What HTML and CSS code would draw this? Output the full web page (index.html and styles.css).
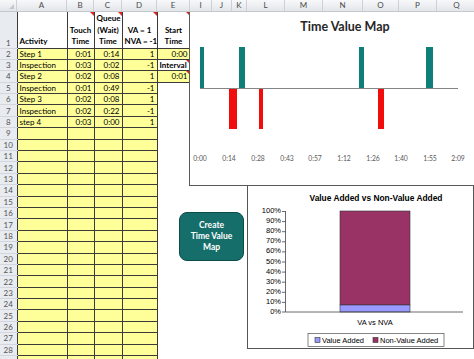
FILE: index.html
```html
<!DOCTYPE html>
<html lang="en">
<head>
  <meta charset="UTF-8">
  <title>Time Value Map</title>
  <link rel="stylesheet" href="styles.css">
</head>
<body>

  <!-- column letters (F:H are hidden) -->
  <div class="colhead">
    <div class="corner"></div>
    <div class="c-a">A</div>
    <div class="c-b">B</div>
    <div class="c-c">C</div>
    <div class="c-d">D</div>
    <div class="c-e">E</div>
    <div class="c-i">I</div>
    <div class="c-j">J</div>
    <div class="c-k">K</div>
    <div class="c-l">L</div>
    <div class="c-m">M</div>
    <div class="c-n">N</div>
    <div class="c-o">O</div>
    <div class="c-p">P</div>
    <div class="c-q">Q</div>
  </div>

  <table class="sheet">
    <colgroup>
      <col class="w-num"><col class="w-a"><col class="w-b"><col class="w-c"><col class="w-d"><col class="w-e">
    </colgroup>
    <tr class="head">
      <th>1</th>
      <td class="left">Activity</td>
      <td class="note">Touch<br>Time</td>
      <td class="note">Queue<br>(Wait)<br>Time</td>
      <td class="note">VA = 1<br>NVA = -1</td>
      <td class="note">Start<br>Time</td>
    </tr>
    <tr><th>2</th><td>Step 1</td><td class="r">0:01</td><td class="r">0:14</td><td class="r">1</td><td class="r">0:00</td></tr>
    <tr><th>3</th><td>Inspection</td><td class="r">0:03</td><td class="r">0:02</td><td class="r">-1</td><td class="label note">Interval</td></tr>
    <tr><th>4</th><td>Step 2</td><td class="r">0:02</td><td class="r">0:08</td><td class="r">1</td><td class="r note">0:01</td></tr>
    <tr><th>5</th><td>Inspection</td><td class="r">0:01</td><td class="r">0:49</td><td class="r">-1</td><td class="blank"></td></tr>
    <tr><th>6</th><td>Step 3</td><td class="r">0:02</td><td class="r">0:08</td><td class="r">1</td><td class="blank"></td></tr>
    <tr><th>7</th><td>Inspection</td><td class="r">0:02</td><td class="r">0:22</td><td class="r">-1</td><td class="blank"></td></tr>
    <tr><th>8</th><td>step 4</td><td class="r">0:03</td><td class="r">0:00</td><td class="r">1</td><td class="blank"></td></tr>
    <tr><th>9</th><td></td><td></td><td></td><td></td><td class="blank"></td></tr>
    <tr><th>10</th><td></td><td></td><td></td><td></td><td class="blank"></td></tr>
    <tr><th>11</th><td></td><td></td><td></td><td></td><td class="blank"></td></tr>
    <tr><th>12</th><td></td><td></td><td></td><td></td><td class="blank"></td></tr>
    <tr><th>13</th><td></td><td></td><td></td><td></td><td class="blank"></td></tr>
    <tr><th>14</th><td></td><td></td><td></td><td></td><td class="blank"></td></tr>
    <tr><th>15</th><td></td><td></td><td></td><td></td><td class="blank"></td></tr>
    <tr><th>16</th><td></td><td></td><td></td><td></td><td class="blank"></td></tr>
    <tr><th>17</th><td></td><td></td><td></td><td></td><td class="blank"></td></tr>
    <tr><th>18</th><td></td><td></td><td></td><td></td><td class="blank"></td></tr>
    <tr><th>19</th><td></td><td></td><td></td><td></td><td class="blank"></td></tr>
    <tr><th>20</th><td></td><td></td><td></td><td></td><td class="blank"></td></tr>
    <tr><th>21</th><td></td><td></td><td></td><td></td><td class="blank"></td></tr>
    <tr><th>22</th><td></td><td></td><td></td><td></td><td class="blank"></td></tr>
    <tr><th>23</th><td></td><td></td><td></td><td></td><td class="blank"></td></tr>
    <tr><th>24</th><td></td><td></td><td></td><td></td><td class="blank"></td></tr>
    <tr><th>25</th><td></td><td></td><td></td><td></td><td class="blank"></td></tr>
    <tr><th>26</th><td></td><td></td><td></td><td></td><td class="blank"></td></tr>
    <tr><th>27</th><td></td><td></td><td></td><td></td><td class="blank"></td></tr>
    <tr><th>28</th><td></td><td></td><td></td><td></td><td class="blank"></td></tr>
    <tr><th></th><td></td><td></td><td></td><td></td><td class="blank"></td></tr>
  </table>

  <!-- Value added vs non-value added chart (sits behind the map) -->
  <div class="chart chart-pct">
    <svg width="225" height="197" viewBox="248 151 225 197">
      <text class="pct-title" x="376" y="201" text-anchor="middle">Value Added vs Non-Value Added</text>
      <g class="pct-labels" text-anchor="end">
        <text x="281" y="212.7">100%</text>
        <text x="281" y="222.9">90%</text>
        <text x="281" y="233">80%</text>
        <text x="281" y="243.2">70%</text>
        <text x="281" y="253.3">60%</text>
        <text x="281" y="263.5">50%</text>
        <text x="281" y="273.6">40%</text>
        <text x="281" y="283.8">30%</text>
        <text x="281" y="293.9">20%</text>
        <text x="281" y="304.1">10%</text>
        <text x="281" y="314.2">0%</text>
      </g>
      <rect class="bar-nva" x="340" y="211" width="70" height="94"/>
      <rect class="bar-va" x="340" y="305" width="70" height="7"/>
      <path class="pct-axis" d="M285.5 211V312H463M282 211.5h3.5M282 221.6h3.5M282 231.7h3.5M282 241.8h3.5M282 251.9h3.5M282 262h3.5M282 272.1h3.5M282 282.2h3.5M282 292.3h3.5M282 302.4h3.5M282 312h3.5"/>
      <text class="pct-cat" x="375" y="325" text-anchor="middle">VA vs NVA</text>
      <rect class="legend" x="308" y="333.5" width="136" height="13"/>
      <rect class="bar-va" x="315" y="337.5" width="5" height="5"/>
      <text class="pct-cat" x="322" y="342.8">Value Added</text>
      <rect class="bar-nva" x="373" y="337.5" width="5" height="5"/>
      <text class="pct-cat" x="380" y="342.8">Non-Value Added</text>
    </svg>
  </div>

  <!-- Time value map -->
  <div class="chart chart-map">
    <svg width="299" height="173" viewBox="190 12 299 173">
      <text class="map-title" x="345" y="31" text-anchor="middle">Time Value Map</text>
      <g class="va">
        <rect x="200" y="47" width="4" height="41"/>
        <rect x="239" y="47" width="6" height="41"/>
        <rect x="359" y="47" width="5" height="41"/>
        <rect x="426" y="47" width="7" height="41"/>
      </g>
      <g class="nva">
        <rect x="229" y="88" width="8" height="41"/>
        <rect x="259" y="88" width="4" height="41"/>
        <rect x="378" y="88" width="6" height="41"/>
      </g>
      <line class="map-axis" x1="200" y1="88.5" x2="458" y2="88.5"/>
      <g class="map-labels" text-anchor="middle">
        <text x="200" y="160.5">0:00</text>
        <text x="229" y="160.5">0:14</text>
        <text x="258" y="160.5">0:28</text>
        <text x="287" y="160.5">0:43</text>
        <text x="315" y="160.5">0:57</text>
        <text x="344" y="160.5">1:12</text>
        <text x="373" y="160.5">1:26</text>
        <text x="401" y="160.5">1:40</text>
        <text x="430" y="160.5">1:55</text>
        <text x="458" y="160.5">2:09</text>
      </g>
    </svg>
  </div>

  <div class="macro-btn">Create<br>Time Value<br>Map</div>

</body>
</html>
```

FILE: styles.css
```css
body {
  margin: 0;
  width: 474px;
  height: 359px;
  overflow: hidden;
  position: relative;
  background: #fff;
  font-family: Lato, "Liberation Sans", sans-serif;
  color: #000;
}

/* column letters */
.colhead {
  display: flex;
  height: 12px;
  box-sizing: border-box;
  background: linear-gradient(#f7f8fa, #e3e6ea);
  border-bottom: 1px solid #c3c8ce;
}

.colhead div {
  flex: none;
  box-sizing: border-box;
  border-right: 1px solid #cdd1d7;
  font-size: 8px;
  line-height: 11px;
  text-align: center;
  color: #4a4a4a;
}

.colhead .corner {
  width: 17px;
  position: relative;
}

.colhead .corner::after {
  content: "";
  position: absolute;
  right: 2px;
  bottom: 2px;
  border-left: 5px solid transparent;
  border-bottom: 5px solid #c3c8ce;
}

.c-a { width: 50px; }
.c-b { width: 27px; }
.c-c { width: 28px; }
.c-d { width: 35px; }
.c-e { width: 33px; }
.c-i { width: 22px; }
.c-j { width: 20px; }
.c-k { width: 15px; }
.c-l { width: 38px; }
.c-m { width: 38px; }
.c-n { width: 40px; }
.c-o { width: 36px; }
.c-p { width: 38px; }
.c-q { width: 40px; }

/* the worksheet */
.sheet {
  border-collapse: collapse;
  table-layout: fixed;
  width: 190px;
  font-size: 8px;
}

.w-num { width: 17px; }
.w-a { width: 50px; }
.w-b { width: 27px; }
.w-c { width: 28px; }
.w-d { width: 35px; }
.w-e { width: 33px; }

.sheet tr {
  height: 11.4px;
}

.sheet th {
  padding: 0;
  font-weight: normal;
  color: #555;
  background: #e8ebef;
  border-top: 1px solid #d3d7dd;
  border-bottom: 1px solid #d3d7dd;
  line-height: 10px;
  text-align: center;
}

.sheet td {
  padding: 0 2px;
  border: 1px solid #3a3a3a;
  background: #ffff99;
  line-height: 10px;
  white-space: nowrap;
  overflow: hidden;
  position: relative;
}

.sheet td.r {
  text-align: right;
}

.sheet td.label {
  background: #fff;
  font-weight: bold;
}

.sheet td.blank {
  background: transparent;
  border: none;
}

.sheet tr.head {
  height: 36px;
}

.sheet tr.head th,
.sheet tr.head td {
  vertical-align: bottom;
  border-top: none;
}

.sheet tr.head td {
  background: #fff;
  font-weight: bold;
  text-align: center;
  line-height: 11.4px;
  padding-bottom: 0;
}

.sheet tr.head td.left {
  text-align: left;
}

/* red comment marker */
.sheet td.note::after {
  content: "";
  position: absolute;
  top: 0;
  right: 0;
  border-left: 4px solid transparent;
  border-top: 4px solid #e0241b;
}

/* floating charts */
.chart {
  position: absolute;
  box-sizing: border-box;
  background: #fff;
  border: 1px solid #5a5a5a;
}

.chart svg {
  display: block;
}

.chart-map {
  left: 189px;
  top: 12px;
  width: 300px;
  height: 174px;
  border-top: none;
  z-index: 2;
}

.map-title {
  font-family: Lato, sans-serif;
  font-weight: bold;
  font-size: 12.5px;
  fill: #262626;
}

.va rect { fill: #0f7d78; }
.nva rect { fill: #f20d0d; }

.map-axis {
  stroke: #858585;
  stroke-width: 1;
}

.map-labels {
  font-family: Lato, sans-serif;
  font-size: 6.8px;
  fill: #595959;
}

.chart-pct {
  left: 247px;
  top: 150px;
  width: 227px;
  height: 199px;
  border-color: #555;
  z-index: 1;
}

.pct-title {
  font-family: "Liberation Sans", Arial, sans-serif;
  font-weight: bold;
  font-size: 8.4px;
  fill: #000;
}

.pct-labels,
.pct-cat {
  font-family: "Liberation Sans", Arial, sans-serif;
  font-size: 7.5px;
  fill: #000;
}

.bar-nva {
  fill: #993366;
  stroke: #333;
  stroke-width: 0.6;
}

.bar-va {
  fill: #9999ff;
  stroke: #333;
  stroke-width: 0.6;
}

.pct-axis {
  fill: none;
  stroke: #444;
  stroke-width: 0.8;
}

.legend {
  fill: #fff;
  stroke: #333;
  stroke-width: 0.6;
}

/* macro button */
.macro-btn {
  position: absolute;
  left: 179px;
  top: 212px;
  width: 65px;
  height: 49px;
  box-sizing: border-box;
  display: flex;
  align-items: center;
  justify-content: center;
  text-align: center;
  background: #166e6a;
  border: 1px solid #0c4d4a;
  border-radius: 8px;
  color: #fff;
  font-weight: bold;
  font-size: 8.5px;
  line-height: 11px;
  z-index: 3;
}
```
